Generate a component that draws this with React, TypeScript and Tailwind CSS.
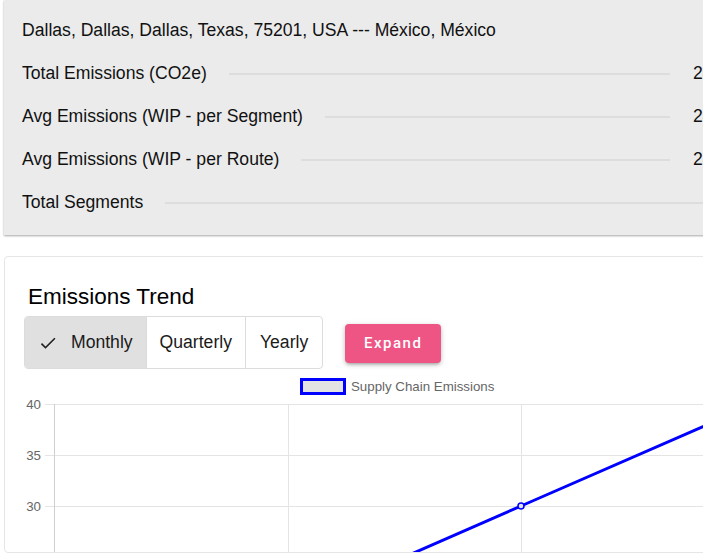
const rows = [
  { label: 'Total Emissions (CO2e)', value: '24.61 kg' },
  { label: 'Avg Emissions (WIP - per Segment)', value: '24.61 kg' },
  { label: 'Avg Emissions (WIP - per Route)', value: '24.61 kg' },
  { label: 'Total Segments', value: '1', short: true },
];

function SummaryPanel() {
  return (
    <div className="ml-[4px] w-[786px] bg-[#ebebeb] pl-[18px] pr-[27px] pt-[9px] pb-[11px] shadow-[0_1px_2px_rgba(0,0,0,0.35)]">
      <div className="flex h-[43px] items-center">Dallas, Dallas, Dallas, Texas, 75201, USA --- México, México</div>
      {rows.map((r) => (
        <div key={r.label} className="flex h-[43px] items-center">
          <span className="whitespace-nowrap">{r.label}</span>
          <div className="ml-[22px] mr-[23px] h-[2px] flex-1 bg-[#dddddd]" />
          <span className={`whitespace-nowrap ${r.short ? '' : 'w-[70px]'}`}>{r.value}</span>
        </div>
      ))}
    </div>
  );
}

function Check() {
  return (
    <svg width="20" height="20" viewBox="0 0 24 24" className="mr-[13px]">
      <path d="M9 16.17 4.83 12l-1.42 1.41L9 19 21 7l-1.41-1.41z" fill="#222" />
    </svg>
  );
}

function TrendChart() {
  const gridY = [405, 456, 507];
  return (
    <svg width="699" height="178" viewBox="4 375 699 178" className="block">
      <rect x="301.5" y="380.5" width="43" height="14" fill="#e3e3e3" stroke="#0000ff" strokeWidth="3" />
      <text x="351" y="392" fontSize="13.3" fill="#666" fontFamily="Liberation Sans, Arial, sans-serif">
        Supply Chain Emissions
      </text>
      {gridY.map((y, i) => (
        <g key={y}>
          <line x1="45" y1={y + 0.5} x2="703" y2={y + 0.5} stroke="#e4e4e4" strokeWidth="1" />
          <text x="41" y={y + 5} fontSize="13.3" fill="#666" textAnchor="end" fontFamily="Liberation Sans, Arial, sans-serif">
            {40 - i * 5}
          </text>
        </g>
      ))}
      <line x1="288.5" y1="405" x2="288.5" y2="553" stroke="#e4e4e4" />
      <line x1="521.5" y1="405" x2="521.5" y2="553" stroke="#e4e4e4" />
      <line x1="54.5" y1="405" x2="54.5" y2="553" stroke="#cfcfcf" />
      <polyline points="288,609 521,507 755,405" fill="none" stroke="#0000ff" strokeWidth="3" />
      <circle cx="521" cy="507" r="3" fill="#e3e3e3" stroke="#0000ff" strokeWidth="1.5" />
    </svg>
  );
}

function TrendCard() {
  return (
    <div className="ml-[4px] mt-[21px] w-[760px] rounded-[4px] border border-[#e6e6e6] bg-white">
      <div className="pl-[23px] pt-[27px] text-[22.5px] leading-[26px] text-black">Emissions Trend</div>
      <div className="mt-[6px] flex items-start pl-[19px]">
        <div className="flex h-[53px] overflow-hidden rounded-[4px] border border-[#dcdcdc] text-[17.6px] text-[#1a1a1a]">
          <button className="flex items-center bg-[#e0e0e0] px-[13px]">
            <Check />
            Monthly
          </button>
          <button className="border-l border-[#dcdcdc] px-[13px]">Quarterly</button>
          <button className="border-l border-[#dcdcdc] px-[14px]">Yearly</button>
        </div>
        <button className="ml-[22px] mt-[8px] h-[39px] w-[96px] rounded-[4px] bg-[#ee5484] font-['Roboto',sans-serif] text-[15px] font-medium tracking-[1.5px] text-white shadow-[0_3px_3px_-2px_rgba(0,0,0,0.2),0_2px_4px_rgba(0,0,0,0.14),0_1px_6px_rgba(0,0,0,0.12)]">
          Expand
        </button>
      </div>
      <div className="ml-[-1px] mt-[5px]">
        <TrendChart />
      </div>
    </div>
  );
}

export default function App() {
  return (
    <div className="h-[553px] w-[703px] overflow-hidden bg-white font-['Liberation_Sans',Arial,sans-serif] text-[17.6px] text-[#111]">
      <SummaryPanel />
      <TrendCard />
    </div>
  );
}
